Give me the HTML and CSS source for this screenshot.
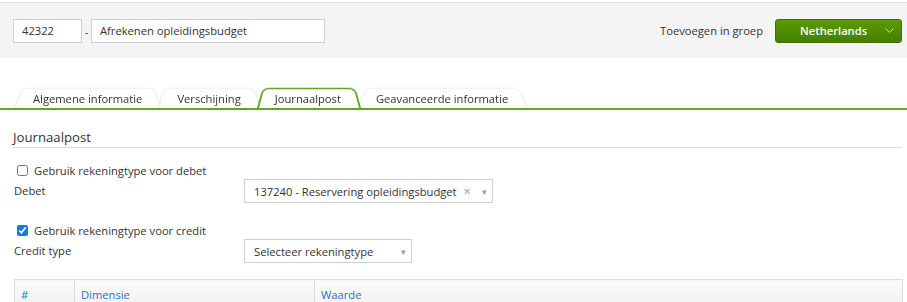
FILE: index.html
```html
<!DOCTYPE html>
<html lang="nl">
<head>
    <meta charset="UTF-8">
    <meta name="viewport" content="width=device-width, initial-scale=1.0">
    <title>Journaalpost</title>
    <link rel="stylesheet" href="styles.css">
</head>
<body>
    <div class="topbar">
        <div class="title-fields">
            <input class="code-input" type="text" value="42322">
            <span class="dash">-</span>
            <input class="name-input" type="text" value="Afrekenen opleidingsbudget">
        </div>
        <div class="group-picker">
            <span class="group-label">Toevoegen in groep</span>
            <button class="group-button" type="button">
                <span>Netherlands</span>
                <svg class="chevron" width="9" height="5" viewBox="0 0 9 5"><path d="M0.5 0.5 L4.5 4.5 L8.5 0.5" fill="none" stroke="#c9dcae" stroke-width="1"/></svg>
            </button>
        </div>
    </div>

    <div class="tabs">
        <div class="tab">Algemene informatie</div>
        <div class="tab">Verschijning</div>
        <div class="tab active">Journaalpost</div>
        <div class="tab">Geavanceerde informatie</div>
    </div>

    <div class="section">
        <h3 class="section-title">Journaalpost</h3>

        <label class="check-row">
            <input type="checkbox">
            <span>Gebruik rekeningtype voor debet</span>
        </label>
        <div class="field-row">
            <span class="field-label">Debet</span>
            <div class="select wide">
                <span class="select-text">137240 - Reservering opleidingsbudget</span>
                <span class="select-clear">&times;</span>
                <span class="select-arrow">&#9662;</span>
            </div>
        </div>

        <label class="check-row spaced">
            <input type="checkbox" checked>
            <span>Gebruik rekeningtype voor credit</span>
        </label>
        <div class="field-row">
            <span class="field-label">Credit type</span>
            <div class="select narrow">
                <span class="select-text">Selecteer rekeningtype</span>
                <span class="select-arrow">&#9662;</span>
            </div>
        </div>

        <table class="dims">
            <thead>
                <tr>
                    <th class="col-nr">#</th>
                    <th class="col-dim">Dimensie</th>
                    <th>Waarde</th>
                </tr>
            </thead>
        </table>
    </div>
</body>
</html>
```

FILE: styles.css
```css
body {
    margin: 0;
    font-family: "Open Sans", Arial, sans-serif;
    font-size: 11.2px;
    color: #333;
    background: #fff;
}

.topbar {
    margin-top: 2px;
    height: 55px;
    border-top: 1px solid #e3e3e3;
    background: #f4f4f4;
    display: flex;
    align-items: center;
    justify-content: space-between;
    padding: 0 5px 0 13px;
}
.title-fields {
    display: flex;
    align-items: center;
}
.code-input, .name-input {
    height: 24px;
    box-sizing: border-box;
    border: 1px solid #cfcfcf;
    background: #fff;
    font-family: inherit;
    font-size: 11.2px;
    color: #333;
    padding: 0 8px;
    outline: none;
}
.code-input {
    width: 69px;
}
.name-input {
    width: 234px;
}
.dash {
    width: 9px;
    text-align: center;
    padding-top: 2px;
}
.group-picker {
    display: flex;
    align-items: center;
    gap: 12px;
}
.group-button {
    width: 127px;
    height: 24px;
    border: 1px solid #3f7300;
    border-radius: 3px;
    background: linear-gradient(#5a9a00, #467f00);
    color: #fff;
    font-family: inherit;
    font-size: 11.2px;
    font-weight: 600;
    display: flex;
    align-items: center;
    justify-content: space-between;
    padding: 0 7px 0 24px;
    cursor: pointer;
}

.tabs {
    display: flex;
    padding: 27px 0 0 14px;
    border-bottom: 2px solid #63a51d;
    height: 23px;
}
.tab {
    position: relative;
    z-index: 1;
    height: 23px;
    line-height: 28px;
    padding: 0 20px 0 19px;
    margin-right: -4px;
    color: #333;
    white-space: nowrap;
}
.tab::before {
    content: "";
    position: absolute;
    top: 0;
    left: 0;
    right: 0;
    bottom: 0;
    z-index: -1;
    background: #fff;
    border: 1px solid #e8e8e8;
    border-bottom: none;
    border-radius: 7px 7px 0 0;
    transform: perspective(30px) rotateX(9deg);
    transform-origin: bottom;
}
.tab.active {
    z-index: 2;
    padding: 0 20px 0 18px;
}
.tab.active::before {
    border: 2px solid #63a51d;
    border-bottom: none;
}

.section {
    padding: 0 5px 0 13px;
}
.section-title {
    margin: 17px 0 0;
    font-size: 13.2px;
    font-weight: normal;
    line-height: 20px;
    border-bottom: 1px solid #dcdcdc;
}
.check-row {
    display: flex;
    align-items: center;
    margin-top: 13px;
    height: 18px;
}
.check-row.spaced {
    margin-top: 18px;
}
.check-row input {
    width: 11px;
    height: 11px;
    margin: 0 6px 0 4px;
    accent-color: #1877e6;
}
.field-row {
    display: flex;
    align-items: center;
    margin-top: 0;
}
.field-label {
    width: 231px;
    padding-left: 1px;
    box-sizing: border-box;
    margin-top: -1px;
}
.select {
    height: 24px;
    box-sizing: border-box;
    border: 1px solid #cfcfcf;
    background: #fff;
    display: flex;
    align-items: center;
    padding: 0 5px 0 9px;
    white-space: nowrap;
}
.select.wide {
    width: 249px;
}
.select.narrow {
    width: 168px;
}
.select-text {
    flex: 1;
}
.select-clear {
    color: #999;
    font-size: 13px;
    margin-right: 11px;
}
.select-arrow {
    color: #999;
    font-size: 9px;
}

.dims {
    margin-top: 16px;
    margin-left: 1px;
    width: 889px;
    border-collapse: collapse;
}
.dims th {
    height: 28px;
    text-align: left;
    font-weight: normal;
    color: #2b71c1;
    padding: 0 6px;
    border: 1px solid #dcdcdc;
    background: linear-gradient(#fbfbfb, #f1f1f1);
}
.dims .col-nr {
    width: 47px;
}
.dims .col-dim {
    width: 227px;
}
```
